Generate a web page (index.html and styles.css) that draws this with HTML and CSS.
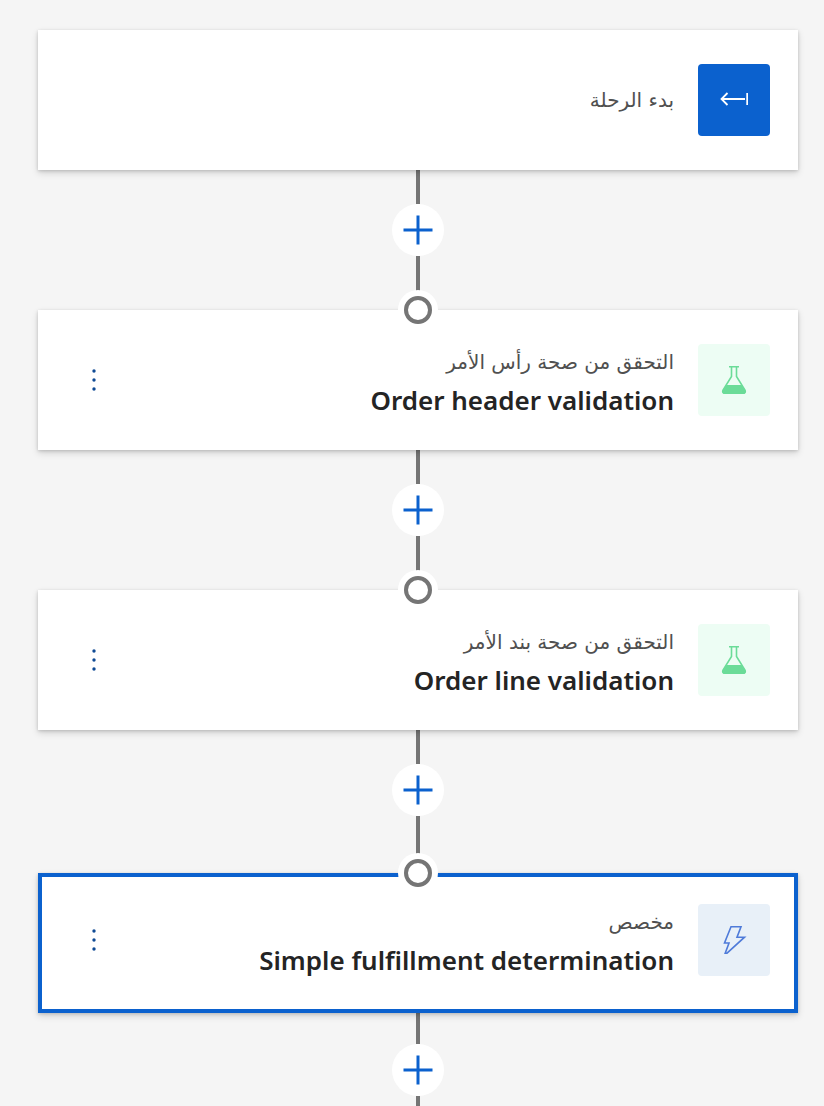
FILE: index.html
```html
<!DOCTYPE html>
<html lang="ar" dir="rtl">
<head>
<meta charset="utf-8">
<meta name="viewport" content="width=device-width, initial-scale=1">
<title>رحلة</title>
<link rel="stylesheet" href="styles.css">
</head>
<body>
<svg class="defs" aria-hidden="true">
  <symbol id="plus" viewBox="0 0 32 32"><path d="M16 1.500v29M1.500 16h29" fill="none" stroke="currentColor" stroke-width="3"/></symbol>
  <symbol id="flask" viewBox="0 0 28 28"><path d="M9 .8h10M11.500 1v9.500L3 24.200c-.8 1.400 0 2.800 1.400 2.800h19.200c1.400 0 2.200-1.400 1.400-2.800L16.500 10.500V1" fill="none" stroke="currentColor" stroke-width="1.600"/><path d="M6.500 19h15l4 6c.6 1.400-.2 3-1.500 3H4c-1.300 0-2.100-1.600-1.500-3z" fill="currentColor"/></symbol>
  <symbol id="dots" viewBox="0 0 24 24"><g fill="currentColor"><circle cx="12" cy="3" r="1.700"/><circle cx="12" cy="12" r="1.700"/><circle cx="12" cy="21" r="1.700"/></g></symbol>
</svg>
<main class="journey">
  <section class="card">
    <span class="tile tile-start"><svg class="tile-icon" viewBox="0 0 28 28" aria-hidden="true"><path d="M27.200 7v12M25 13H1.500M7.500 7l-6 6 6 6" fill="none" stroke="currentColor" stroke-width="1.800"/></svg></span>
    <div class="text"><p class="kind">بدء الرحلة</p></div>
  </section>
  <div class="connector"><button class="add" type="button" aria-label="إضافة"><svg class="plus" aria-hidden="true"><use href="#plus"/></svg></button></div>

  <section class="card">
    <span class="port"></span>
    <span class="tile tile-check"><svg class="tile-icon" aria-hidden="true"><use href="#flask"/></svg></span>
    <div class="text"><p class="kind">التحقق من صحة رأس الأمر</p><h2 class="name">Order header validation</h2></div>
    <button class="more" type="button" aria-label="المزيد"><svg class="dots" aria-hidden="true"><use href="#dots"/></svg></button>
  </section>
  <div class="connector"><button class="add" type="button" aria-label="إضافة"><svg class="plus" aria-hidden="true"><use href="#plus"/></svg></button></div>

  <section class="card">
    <span class="port"></span>
    <span class="tile tile-check"><svg class="tile-icon" aria-hidden="true"><use href="#flask"/></svg></span>
    <div class="text"><p class="kind">التحقق من صحة بند الأمر</p><h2 class="name">Order line validation</h2></div>
    <button class="more" type="button" aria-label="المزيد"><svg class="dots" aria-hidden="true"><use href="#dots"/></svg></button>
  </section>
  <div class="connector connector-long"><button class="add" type="button" aria-label="إضافة"><svg class="plus" aria-hidden="true"><use href="#plus"/></svg></button></div>

  <section class="card card-selected">
    <span class="port"></span>
    <span class="tile tile-action"><svg class="tile-icon" viewBox="0 0 28 28" aria-hidden="true"><path d="M11 .8h10l-4 10.400h7.500L7 27.200H5.200L9 17H4.500z" fill="none" stroke="currentColor" stroke-width="1.600"/></svg></span>
    <div class="text"><p class="kind">مخصص</p><h2 class="name">Simple fulfillment determination</h2></div>
    <button class="more" type="button" aria-label="المزيد"><svg class="dots" aria-hidden="true"><use href="#dots"/></svg></button>
  </section>
  <div class="connector connector-end"><button class="add" type="button" aria-label="إضافة"><svg class="plus" aria-hidden="true"><use href="#plus"/></svg></button></div>
</main>
</body>
</html>
```
FILE: styles.css
```css
* { box-sizing: border-box; }
body {
  margin: 0;
  background: #f5f5f5;
  color: #242424;
  font-family: "Noto Sans", "DejaVu Sans", sans-serif;
}
.defs { display: none; }
button {
  display: grid;
  place-items: center;
  border: 0;
  padding: 0;
  background: none;
  cursor: pointer;
}
.journey { padding: 30px 26px 0 38px; }
.card {
  position: relative;
  display: flex;
  align-items: flex-start;
  gap: 24px;
  min-height: 140px;
  padding: 34px 28px 30px;
  background: #fff;
  box-shadow: 0 3px 7px rgba(0, 0, 0, .14), 0 1px 3px rgba(0, 0, 0, .16);
}
.card-selected {
  border: 4px solid #0b61ce;
  padding: 27px 24px 29px;
}
.tile {
  flex: none;
  display: grid;
  place-items: center;
  width: 72px;
  height: 72px;
  border-radius: 4px;
}
.tile-icon { width: 28px; height: 28px; }
.tile-start { background: #0b61ce; color: #fff; }
.tile-check { background: #edfdf4; color: #6bdc98; }
.tile-action { background: #e8f0f8; color: #4f7bd9; }
.text {
  flex: 1;
  min-width: 0;
  min-height: 72px;
  display: flex;
  flex-direction: column;
  justify-content: center;
}
.kind {
  margin: 0;
  color: #505050;
  font: 20px/36px "DejaVu Sans", sans-serif;
}
.name {
  margin: 0;
  font-size: 26px;
  font-weight: 600;
  line-height: 40px;
}
.more { width: 48px; height: 72px; margin-inline-end: 4px; color: #0f4a94; }
.dots { width: 24px; height: 24px; }
.port {
  position: absolute;
  top: 0;
  left: 50%;
  width: 28px;
  height: 28px;
  margin: -14px 0 0 -14px;
  border: 4px solid #757575;
  border-radius: 50%;
  background: #fff;
  box-shadow: 0 0 0 6px #fff;
}
.card-selected .port { margin-top: -18px; }
.connector {
  display: flex;
  flex-direction: column;
  align-items: center;
  height: 140px;
}
.connector::before, .connector::after {
  content: "";
  width: 4px;
  background: #757575;
}
.connector::before { height: 34px; }
.connector::after { flex: 1; }
.connector-long { height: 143px; }
.connector-end { height: 93px; }
.connector-end::before { height: 31px; }
.add {
  width: 52px;
  height: 52px;
  border-radius: 50%;
  background: #fff;
  color: #0b61ce;
}
.plus { width: 32px; height: 32px; }
```
